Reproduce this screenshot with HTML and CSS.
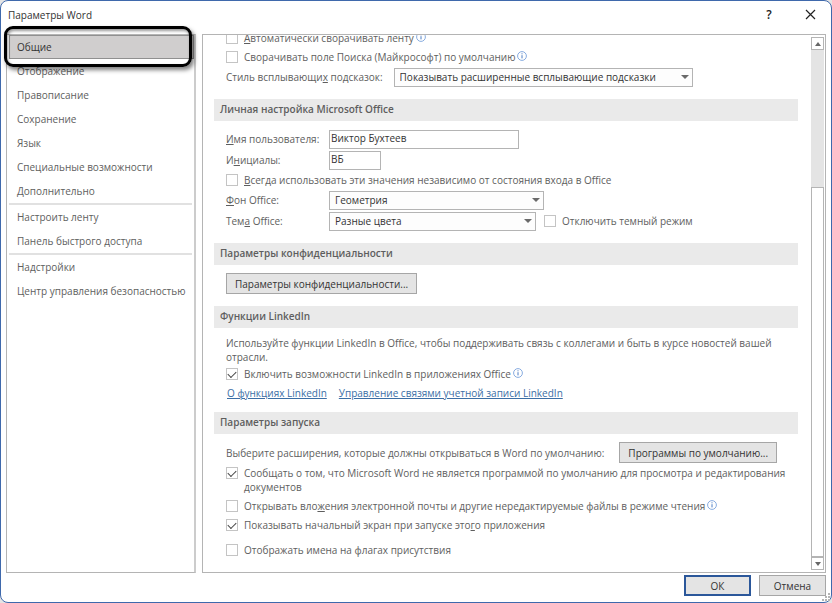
FILE: index.html
```html
<!DOCTYPE html>
<html lang="ru">

<head>
  <meta charset="UTF-8">
  <meta name="viewport" content="width=device-width, initial-scale=1.0">
  <title>Параметры Word</title>
  <link rel="stylesheet" href="styles.css">
</head>

<body>
  <svg width="0" height="0" class="sprite" aria-hidden="true">
    <symbol id="info" viewBox="0 0 10 10">
      <circle cx="5" cy="5" r="4.4" fill="none" stroke="#7ba3dc" stroke-width="0.9" />
      <path d="M5 4.2v3.2M5 2.3v1" stroke="#4a7cc4" stroke-width="1" />
    </symbol>
  </svg>

  <div class="window">
    <header class="titlebar">
      <h1>Параметры Word</h1>
      <button type="button" class="title-btn" aria-label="Справка">?</button>
      <button type="button" class="title-btn" aria-label="Закрыть">
        <svg width="11" height="11" viewBox="0 0 11 11"><path d="M1 1l9 9M10 1l-9 9" stroke="#222" stroke-width="1.2" /></svg>
      </button>
    </header>

    <div class="panes">
      <nav class="sidebar">
        <a href="#" class="active">Общие</a>
        <a href="#">Отображение</a>
        <a href="#">Правописание</a>
        <a href="#">Сохранение</a>
        <a href="#">Язык</a>
        <a href="#">Специальные возможности</a>
        <a href="#">Дополнительно</a>
        <hr>
        <a href="#">Настроить ленту</a>
        <a href="#">Панель быстрого доступа</a>
        <hr>
        <a href="#">Надстройки</a>
        <a href="#">Центр управления безопасностью</a>
        <div class="callout"></div>
      </nav>

      <main class="content">
        <div class="scroll">
          <section class="group first">
            <div class="check">
              <input type="checkbox" id="ribbon">
              <label for="ribbon"><u>А</u>втоматически сворачивать ленту</label>
              <svg class="info"><use href="#info" /></svg>
            </div>
            <div class="check">
              <input type="checkbox" id="search">
              <label for="search">Сворачивать поле Поиска (Майкрософт) по умолчанию</label>
              <svg class="info"><use href="#info" /></svg>
            </div>
            <div class="row">
              <label for="tips">Стиль всплывающи<u>х</u> подсказок:</label>
              <span class="select tips">
                <select id="tips"><option>Показывать расширенные всплывающие подсказки</option></select>
              </span>
            </div>
          </section>

          <h2>Личная настройка Microsoft Office</h2>
          <section class="group">
            <div class="row field">
              <label for="name"><u>И</u>мя пользователя:</label>
              <input type="text" id="name" class="name" value="Виктор Бухтеев">
            </div>
            <div class="row field">
              <label for="initials">И<u>н</u>ициалы:</label>
              <input type="text" id="initials" class="initials" value="ВБ">
            </div>
            <div class="check">
              <input type="checkbox" id="always">
              <label for="always"><u>В</u>сегда использовать эти значения независимо от состояния входа в Office</label>
            </div>
            <div class="row field">
              <label for="background"><u>Ф</u>он Office:</label>
              <span class="select background">
                <select id="background"><option>Геометрия</option></select>
              </span>
            </div>
            <div class="row field">
              <label for="theme">Тем<u>а</u> Office:</label>
              <span class="select theme">
                <select id="theme"><option>Разные цвета</option></select>
              </span>
              <div class="check dark">
                <input type="checkbox" id="dark">
                <label for="dark">Отключить темный режим</label>
              </div>
            </div>
          </section>

          <h2>Параметры конфиденциальности</h2>
          <section class="group">
            <button type="button" class="btn">Параметры конфиденциальности...</button>
          </section>

          <h2>Функции LinkedIn</h2>
          <section class="group">
            <p>Используйте функции LinkedIn в Office, чтобы поддерживать связь с коллегами и быть в курсе новостей вашей отрасли.</p>
            <div class="check">
              <input type="checkbox" id="linkedin" checked>
              <label for="linkedin">Включить возможности LinkedIn в приложениях Office</label>
              <svg class="info"><use href="#info" /></svg>
            </div>
            <div class="links">
              <a href="#">О функциях LinkedIn</a>
              <a href="#">Управление связями учетной записи LinkedIn</a>
            </div>
          </section>

          <h2>Параметры запуска</h2>
          <section class="group">
            <div class="row defaults">
              <span>Выберите расширения, которые должны открываться в Word по умолчанию:</span>
              <button type="button" class="btn">Программы по умолчанию...</button>
            </div>
            <div class="check">
              <input type="checkbox" id="notify" checked>
              <label for="notify">Сообщать о том, что Microsoft Word не является программой по умолчанию для просмотра и редактирования документов</label>
            </div>
            <div class="check">
              <input type="checkbox" id="attachments">
              <label for="attachments">Открывать вло<u>ж</u>ения электронной почты и другие нередактируемые файлы в режиме чтения</label>
              <svg class="info"><use href="#info" /></svg>
            </div>
            <div class="check">
              <input type="checkbox" id="start" checked>
              <label for="start">Показывать начальный экран при запуске это<u>г</u>о приложения</label>
            </div>
            <div class="check presence">
              <input type="checkbox" id="presence">
              <label for="presence">Отображать имена на флагах присутствия</label>
            </div>
          </section>
        </div>

        <div class="scrollbar">
          <button type="button" class="up" aria-label="Вверх"></button>
          <div class="track"><div class="thumb"></div></div>
          <button type="button" class="down" aria-label="Вниз"></button>
        </div>
      </main>
    </div>

    <footer class="footer">
      <button type="button" class="btn ok">ОК</button>
      <button type="button" class="btn cancel">Отмена</button>
    </footer>
    <svg class="grip" width="8" height="8" viewBox="0 0 8 8" fill="#b4b4b4">
      <path d="M6 0h2v2h-2zM3 3h2v2h-2zM6 3h2v2h-2zM0 6h2v2h-2zM3 6h2v2h-2zM6 6h2v2h-2z" />
    </svg>
  </div>
</body>

</html>
```
FILE: styles.css
```css
:root {
  --text: #5e5e5e;
  --dark: #333;
  --line: #b4b4b4;
  --accent: #3f69ac;
}

* {
  box-sizing: border-box;
}

body {
  margin: 0;
  background-color: #e4e4e4;
  color: var(--text);
  font-family: "Open Sans", "Noto Sans", sans-serif;
  font-size: 10px;
  line-height: 14px;
}

button,
input,
select {
  margin: 0;
  font: inherit;
  color: var(--dark);
}

.sprite {
  position: absolute;
}

.window {
  position: relative;
  display: flex;
  flex-direction: column;
  min-height: 100vh;
  padding: 0 5px 6px 5px;
  background-color: #fff;
  border: 1px solid var(--accent);
  border-radius: 8px;
}

/* Title bar */
.titlebar {
  display: flex;
  align-items: center;
  height: 27px;
  margin-bottom: 6px;
}

.titlebar h1 {
  flex: 1;
  margin: 0 0 0 2px;
  color: var(--dark);
  font-size: 10px;
  font-weight: normal;
}

.title-btn {
  width: 34px;
  padding: 0;
  background: none;
  border: none;
  color: #222;
  font-size: 12px;
  font-weight: 600;
}

.title-btn svg {
  display: block;
  margin: 0 4px 0 auto;
}

.title-btn:last-child {
  margin-right: 6px;
}

.panes {
  flex: 1;
  display: grid;
  grid-template-columns: 190px 1fr;
  gap: 6px;
}

/* Sidebar */
.sidebar {
  position: relative;
  border: 1px solid var(--line);
  border-right: 2px solid #ccc;
}

.sidebar a {
  display: block;
  height: 24px;
  padding: 0 10px;
  color: var(--text);
  line-height: 24px;
  text-decoration: none;
  white-space: nowrap;
}

.sidebar a.active {
  margin-left: 2px;
  padding: 0 7px;
  background-color: #d0cece;
  border: 1px solid #909090;
  color: var(--dark);
  line-height: 22px;
}

.sidebar hr {
  height: 2px;
  margin: 0 2px;
  background-color: #e1e1e1;
  border: none;
}

.callout {
  position: absolute;
  top: -9px;
  left: -3px;
  right: 2px;
  height: 41px;
  border: 3px solid #000;
  border-radius: 9px;
  box-shadow: 2px 3px 4px rgba(0, 0, 0, 0.5), inset 1px 2px 3px rgba(0, 0, 0, 0.4);
}

/* Options */
.content {
  display: flex;
  min-width: 0;
  overflow: hidden;
  border: 1px solid var(--line);
}

.scroll {
  flex: 1;
  min-width: 0;
  margin-top: -6px;
  padding: 0 11px;
}

.scroll h2 {
  height: 22px;
  margin: 0;
  padding: 0 6px;
  background-color: #eaeaea;
  font-size: 10px;
  font-weight: 600;
  line-height: 21px;
}

.group {
  display: flex;
  flex-direction: column;
  align-items: flex-start;
  gap: 1px;
  padding: 8px 4px 12px 12px;
}

.group.first {
  padding-top: 0;
}

.group p {
  margin: 0;
}

.row {
  display: flex;
  align-items: center;
  gap: 11px;
  min-height: 20px;
}

.field {
  display: grid;
  grid-template-columns: 103px auto auto;
  gap: 0;
}

.check {
  display: flex;
  align-items: flex-start;
  padding: 2px 0;
}

.check label {
  margin-left: 6px;
}

input[type="checkbox"] {
  flex: none;
  display: grid;
  place-items: center;
  width: 12px;
  height: 12px;
  margin-top: 1px;
  background-color: #fff;
  border: 1px solid #c4c4c4;
  appearance: none;
}

input[type="checkbox"]:checked::after {
  content: "";
  width: 7px;
  height: 4px;
  margin-top: -2px;
  border: solid #444;
  border-width: 0 0 1px 1px;
  transform: rotate(-45deg);
}

.info {
  flex: none;
  width: 10px;
  height: 10px;
  margin: 1px 0 0 2px;
}

input[type="text"] {
  height: 19px;
  padding: 0 1px 2px;
  border: 1px solid var(--line);
}

.name {
  width: 190px;
}

.initials {
  width: 52px;
}

.select {
  position: relative;
  display: block;
  height: 19px;
}

.select::after {
  content: "";
  position: absolute;
  top: 7px;
  right: 4px;
  border: 4px solid transparent;
  border-top-color: #6a6a6a;
  border-bottom: none;
  pointer-events: none;
}

.select select {
  display: block;
  width: 100%;
  height: 19px;
  padding: 0 5px;
  background-color: #fdfdfd;
  border: 1px solid var(--line);
  border-radius: 0;
  appearance: none;
}

.tips {
  width: 299px;
}

.background {
  width: 215px;
}

.theme {
  width: 207px;
}

.dark {
  margin-left: 8px;
}

.defaults {
  gap: 15px;
}

.presence {
  margin-top: 6px;
}

.links {
  display: flex;
  gap: 12px;
  padding: 2px 1px 0;
}

.links a {
  color: #3b6ea5;
}

.btn {
  height: 21px;
  padding: 0 8px;
  background-color: #e4e4e4;
  border: 1px solid #a6a6a6;
  border-radius: 0;
  white-space: nowrap;
}

/* Scrollbar */
.scrollbar {
  display: flex;
  flex-direction: column;
  width: 13px;
  margin: 2px 1px 2px 2px;
  background-color: #e4e4e4;
}

.scrollbar button {
  display: grid;
  place-items: center;
  height: 13px;
  padding: 0;
  background-color: #fff;
  border: 1px solid var(--line);
}

.scrollbar button::after {
  content: "";
  border: 3px solid transparent;
}

.scrollbar .up::after {
  border-top: none;
  border-bottom: 4px solid #666;
}

.scrollbar .down::after {
  border-bottom: none;
  border-top: 4px solid #666;
}

.track {
  flex: 1;
  display: flex;
  align-items: flex-end;
}

.thumb {
  width: 100%;
  height: 73%;
  background-color: #fff;
  border: 1px solid var(--line);
}

/* Footer */
.footer {
  display: flex;
  justify-content: flex-end;
  gap: 8px;
  margin-top: 2px;
}

.ok,
.cancel {
  width: 67px;
}

.ok {
  border: 2px solid #2b579a;
}

.grip {
  position: absolute;
  right: 1px;
  bottom: 1px;
}
```
